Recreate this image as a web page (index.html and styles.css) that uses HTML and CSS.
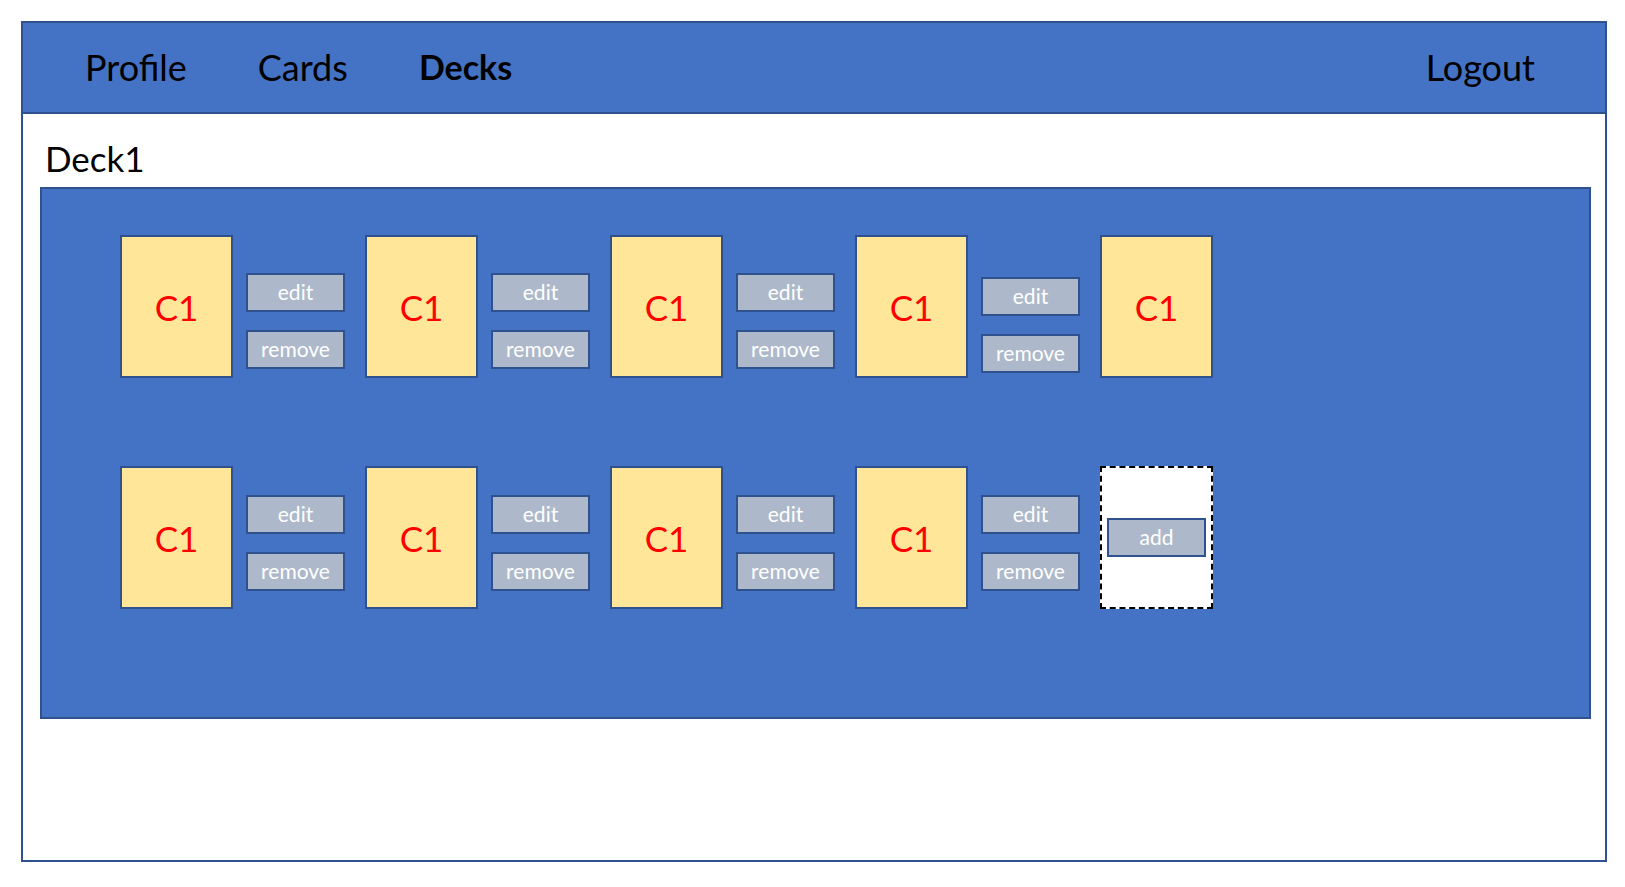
FILE: index.html
```html
<!DOCTYPE html>
<html lang="en">
<head>
<meta charset="utf-8">
<title>Decks</title>
<link rel="stylesheet" href="styles.css">
</head>
<body>
<div class="frame">
  <header class="topbar">
    <nav class="nav">
      <a class="nav-item">Profile</a>
      <a class="nav-item">Cards</a>
      <a class="nav-item active">Decks</a>
    </nav>
    <a class="nav-item logout">Logout</a>
  </header>
  <main class="content">
    <h1 class="deck-title">Deck1</h1>
    <section class="deck-panel">
      <div class="card-row row-a">
        <div class="unit"><div class="card">C1</div><div class="actions"><button class="btn">edit</button><button class="btn">remove</button></div></div>
        <div class="unit"><div class="card">C1</div><div class="actions"><button class="btn">edit</button><button class="btn">remove</button></div></div>
        <div class="unit"><div class="card">C1</div><div class="actions"><button class="btn">edit</button><button class="btn">remove</button></div></div>
        <div class="unit"><div class="card">C1</div><div class="actions lower"><button class="btn">edit</button><button class="btn">remove</button></div></div>
        <div class="unit"><div class="card">C1</div></div>
      </div>
      <div class="card-row row-b">
        <div class="unit"><div class="card">C1</div><div class="actions"><button class="btn">edit</button><button class="btn">remove</button></div></div>
        <div class="unit"><div class="card">C1</div><div class="actions"><button class="btn">edit</button><button class="btn">remove</button></div></div>
        <div class="unit"><div class="card">C1</div><div class="actions"><button class="btn">edit</button><button class="btn">remove</button></div></div>
        <div class="unit"><div class="card">C1</div><div class="actions"><button class="btn">edit</button><button class="btn">remove</button></div></div>
        <div class="unit"><div class="card add-slot"><button class="btn">add</button></div></div>
      </div>
    </section>
  </main>
</div>
</body>
</html>
```

FILE: styles.css
```css
* { box-sizing: border-box; }
html, body { margin: 0; padding: 0; background: #ffffff; }
body {
  font-family: Lato, "Open Sans", "Liberation Sans", sans-serif;
  color: #000;
  padding: 21px 0 0 21px;
}
.frame {
  width: 1586px;
  height: 841px;
  border: 2px solid #2F528F;
  display: flex;
  flex-direction: column;
}
.topbar {
  height: 91px;
  background: #4472C4;
  border-bottom: 2px solid #2F528F;
  display: flex;
  align-items: center;
  justify-content: space-between;
  padding: 0 70px 2px 62px;
  flex: none;
}
.nav { display: flex; gap: 71px; align-items: center; }
.nav-item {
  font-size: 36px;
  color: #000;
  text-decoration: none;
  line-height: 1;
}
.nav-item.active { font-weight: 700; font-size: 34px; }
.content {
  padding: 0 14px 0 17px;
}
.deck-title {
  margin: 0;
  font-weight: 400;
  font-size: 35px;
  line-height: 1;
  padding: 27px 0 0 5px;
  height: 73px;
}
.deck-panel {
  width: 1551px;
  height: 532px;
  background: #4472C4;
  border: 2px solid #2F528F;
  padding: 46px 0 0 78px;
  display: flex;
  flex-direction: column;
  gap: 88px;
}
.card-row { display: flex; }
.unit {
  width: 245px;
  display: flex;
  align-items: flex-start;
  gap: 13px;
  flex: none;
}
.card {
  width: 113px;
  height: 143px;
  background: #FFE699;
  border: 2px solid #2F528F;
  color: #FF0000;
  font-size: 35px;
  display: flex;
  align-items: center;
  justify-content: center;
  flex: none;
}
.actions {
  display: flex;
  flex-direction: column;
  gap: 18px;
  margin-top: 38px;
}
.row-b .actions { margin-top: 29px; }
.actions.lower { margin-top: 42px; }
.btn {
  width: 99px;
  height: 39px;
  background: #ADB9CA;
  border: 2px solid #2F528F;
  color: #ffffff;
  font-family: Lato, "Open Sans", "Liberation Sans", sans-serif;
  font-size: 21px;
  padding: 0 0 2px;
  margin: 0;
  display: flex;
  align-items: center;
  justify-content: center;
}
.add-slot {
  background: #ffffff;
  border: 2px dashed #000000;
}
```
